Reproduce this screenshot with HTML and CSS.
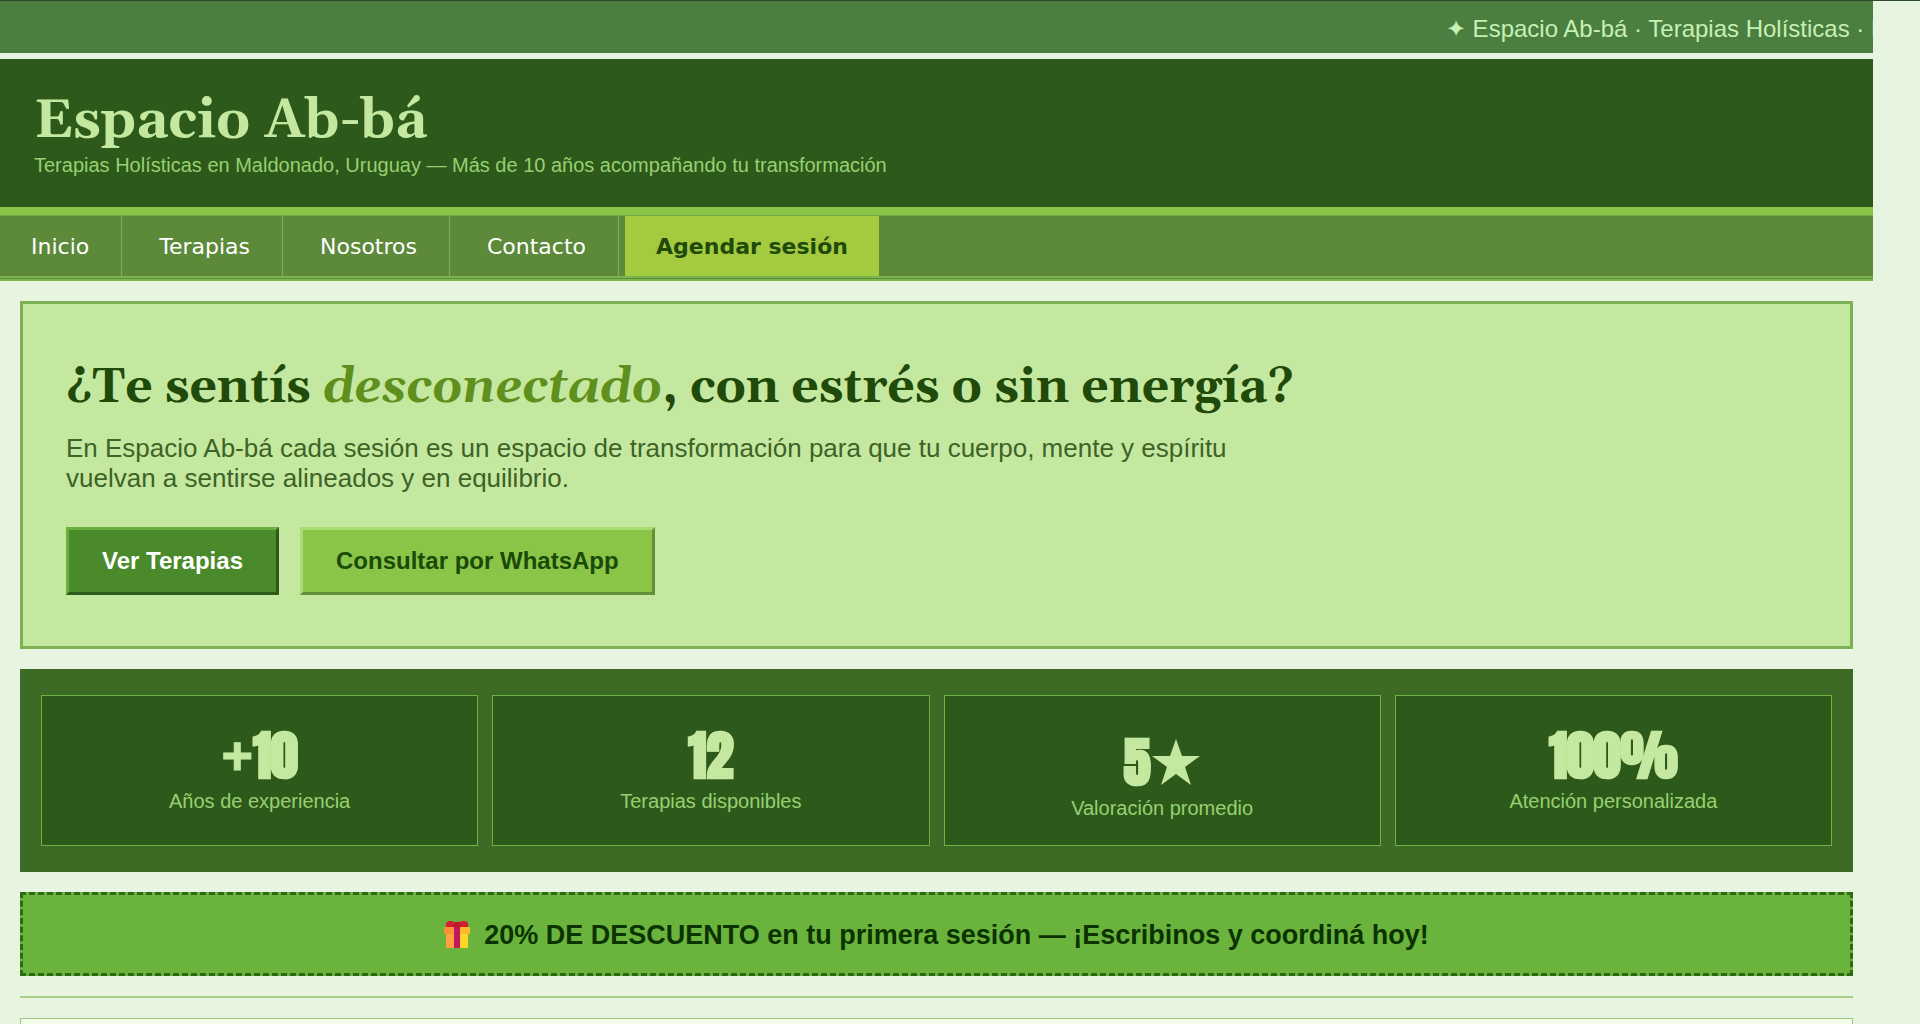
FILE: index.html
```html
<!DOCTYPE html>
<html lang="es">
<head>
<meta charset="utf-8">
<meta name="viewport" content="width=device-width, initial-scale=1">
<title>Espacio Ab-bá</title>
<link rel="stylesheet" href="styles.css">
</head>
<body>
<div class="page">
  <div class="ticker">✦ Espacio Ab-bá · Terapias Holísticas · Maldonado, Uruguay</div>
  <header class="masthead">
    <h1 class="brand">Espacio Ab-bá</h1>
    <p class="tagline">Terapias Holísticas en Maldonado, Uruguay — Más de 10 años acompañando tu transformación</p>
  </header>
  <nav class="menu">
    <a class="menu-link" href="#inicio">Inicio</a>
    <a class="menu-link" href="#terapias">Terapias</a>
    <a class="menu-link" href="#nosotros">Nosotros</a>
    <a class="menu-link" href="#contacto">Contacto</a>
    <a class="menu-link menu-cta" href="#agendar">Agendar sesión</a>
  </nav>
  <main class="content">
    <section class="hero">
      <h2 class="hero-title">¿Te sentís <em>desconectado</em>, con estrés o sin energía?</h2>
      <p class="hero-text">En Espacio Ab-bá cada sesión es un espacio de transformación para que tu cuerpo, mente y espíritu vuelvan a sentirse alineados y en equilibrio.</p>
      <div class="actions">
        <button class="btn btn-dark" type="button">Ver Terapias</button>
        <button class="btn btn-lime" type="button">Consultar por WhatsApp</button>
      </div>
    </section>
    <section class="stats">
      <div class="stat"><strong class="stat-number"><span class="plus">+</span>10</strong><span class="stat-label">Años de experiencia</span></div>
      <div class="stat"><strong class="stat-number">12</strong><span class="stat-label">Terapias disponibles</span></div>
      <div class="stat stat-rating"><strong class="stat-number">5<svg class="star" viewBox="0 0 48 46" aria-hidden="true"><path d="M24 0l6 17h18L33 28l6 18-15-11L9 46l6-18L0 17h18z"/></svg></strong><span class="stat-label">Valoración promedio</span></div>
      <div class="stat"><strong class="stat-number">100%</strong><span class="stat-label">Atención personalizada</span></div>
    </section>
    <p class="promo">
      <svg class="gift" viewBox="0 0 26 28" aria-hidden="true">
        <rect x="2" y="10" width="22" height="17" rx="1" fill="#ff9f3f"/>
        <rect x="15" y="10" width="9" height="17" rx="1" fill="#ffd52a"/>
        <rect x="0" y="6" width="26" height="7" rx="1" fill="#f9913a"/>
        <rect x="16" y="6" width="10" height="7" rx="1" fill="#fdbb2c"/>
        <path d="M2 6q-1-4 2-6 4-1 8 2h2q4-3 8-2 3 2 2 6z" fill="#d5202f"/>
        <rect x="10" y="5" width="6" height="22" fill="#c2185b"/>
        <path d="M8 6l3-5h4l3 5z" fill="#b71c2c"/>
      </svg>
      <span>20% DE DESCUENTO en tu primera sesión — ¡Escribinos y coordiná hoy!</span>
    </p>
    <hr class="rule">
    <section class="panel"></section>
  </main>
</div>
</body>
</html>
```
FILE: styles.css
```css
* { box-sizing: border-box; }
html { background: #e6f4e0; }
body {
  margin: 0;
  border-top: 1px solid #2d4a2b;
  background: #e6f4e0;
  font-family: "Liberation Sans", Arial, sans-serif;
  overflow-x: hidden;
}
h1, h2, p { margin: 0; }
.page { margin-right: 47px; }
.ticker {
  padding: 3px 0 0 77.2%;
  background: #4b7f40;
  color: #c8f0b4;
  font-size: 24px;
  line-height: 49px;
  white-space: nowrap;
  overflow: hidden;
}
.masthead {
  margin-top: 6px;
  padding: 31px 34px 29px;
  border-bottom: 8px solid #8bc547;
  background: #2d5a1b;
}
.brand {
  color: #c5e8a0;
  font: bold 54px/62px Georgia, Gelasio, "Liberation Serif", serif;
}
.tagline { color: #98d070; font-size: 20px; line-height: 26px; }
.menu {
  display: flex;
  gap: 6px;
  border-top: 1px solid #70a840;
  border-bottom: 5px double #7ab64c;
  background: #5c8a3a;
}
.menu-link {
  padding: 2px 32px 0 31px;
  border-right: 1px solid #7cb14f;
  color: #fff;
  font: 22px/58px Verdana, "DejaVu Sans", sans-serif;
  text-decoration: none;
}
.menu-cta { padding-right: 31px; border: 0; background: #a4ca40; color: #1f4a0a; font-weight: bold; }
.content { display: flex; flex-direction: column; gap: 20px; padding: 20px; }
.hero {
  padding: 54px 43px 51px;
  border: 3px solid #7db054;
  background: #c5e8a0;
}
.hero-title {
  color: #1f4a0a;
  font: bold 48px/60px Georgia, Gelasio, "Liberation Serif", serif;
}
.hero-title em { color: #5f8f1c; }
.hero-text {
  max-width: 1200px;
  margin-top: 15px;
  color: #3d6326;
  font-size: 26px;
  line-height: 30px;
}
.actions { display: flex; gap: 21px; margin-top: 34px; }
.btn {
  padding: 17px 33px;
  border: 3px solid;
  font: bold 24px/28px "Liberation Sans", Arial, sans-serif;
}
.btn-dark { border-color: #69b03c #2d5a1b #2d5a1b #69b03c; background: #4a8a2a; color: #fff; }
.btn-lime { border-color: #a8dc70 #64903c #64903c #a8dc70; background: #8bc547; color: #1a4a08; }
.stats {
  display: grid;
  grid-template-columns: repeat(4, 1fr);
  gap: 14px;
  padding: 26px 21px;
  background: #3d6b25;
}
.stat {
  display: flex;
  flex-direction: column;
  align-items: center;
  min-height: 151px;
  padding-top: 26px;
  border: 1px solid #6db33f;
  background: #2d5a1b;
}
.stat-rating { padding-top: 33px; }
.stat-number {
  display: flex;
  align-items: center;
  color: #c5e8a0;
  font: bold 54px/66px Impact, Anton, "Liberation Sans Narrow", "Liberation Sans", sans-serif;
  -webkit-text-stroke: 1px #c5e8a0;
}
.plus { font-family: "Liberation Sans", Arial, sans-serif; }
.star { width: 48px; height: 46px; margin-left: 2px; fill: #c5e8a0; }
.stat-label { color: #98d070; font-size: 20px; line-height: 26px; }
.promo {
  display: flex;
  justify-content: center;
  align-items: center;
  gap: 14px;
  padding: 24px 23px 22px;
  border: 3px dashed #2d6a14;
  background: #6ab43e;
  color: #0a3300;
  font-size: 27px;
  font-weight: bold;
  line-height: 32px;
}
.gift { width: 26px; height: 28px; }
.rule { width: 100%; height: 2px; margin: 0; border: 0; background: #a8cf88; }
.panel { min-height: 200px; border: 1px solid #9cc67c; background: #f4fde8; }
```
